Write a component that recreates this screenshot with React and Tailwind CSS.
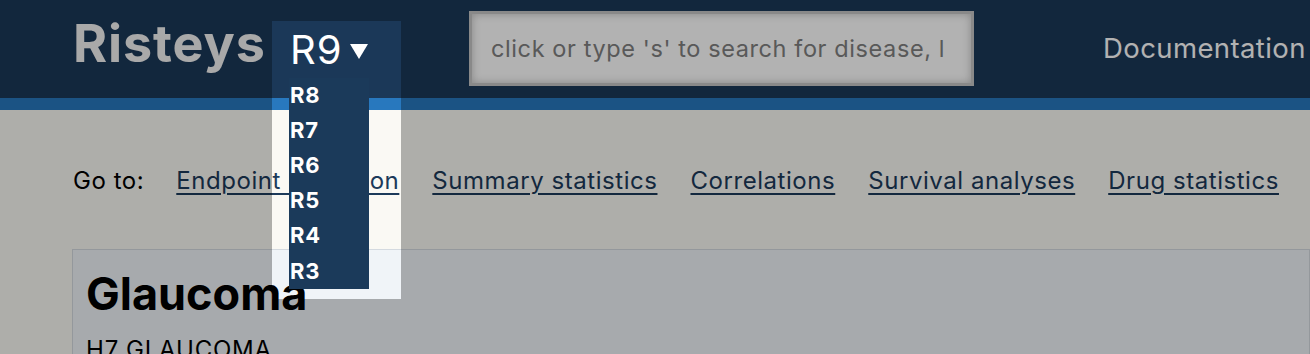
const releases = ['R8', 'R7', 'R6', 'R5', 'R4', 'R3']
const links = ['Endpoint definition', 'Summary statistics', 'Correlations', 'Survival analyses', 'Drug statistics']

export default function App() {
    return (
        <div className="relative min-h-[354px] overflow-hidden bg-[#faf9f4] font-['Inter',sans-serif]">
            <header className="flex items-start h-[98px] bg-[#1b3858] pl-[73px] whitespace-nowrap">
                <div className="w-[199px] mt-[18px] text-[52px] leading-none font-bold tracking-[0.9px] text-[#f2f2f2]">Risteys</div>
                <div className="relative mt-[21px] w-[129px] h-[77px]">
                    <div className="flex items-center gap-[7px] pl-[18px] pt-[8.5px] text-[40px] leading-none tracking-[1px] text-white">
                        R9
                        <svg width="18" height="15" viewBox="0 0 18 15" className="mt-[4px]">
                            <path d="M0 0 H18 L9 15 Z" fill="white" />
                        </svg>
                    </div>
                </div>
                <div className="ml-[68px] mt-[11px] w-[505px] h-[75px] border-[3px] border-[#c4c4c4] bg-white shadow-[inset_0_0_8px_rgba(0,0,0,0.25)] flex items-center pl-[19px] overflow-hidden">
                    <span className="text-[23.5px] tracking-[0.6px] text-[#808080]">click or type 's' to search for disease, l</span>
                </div>
                <div className="ml-[129px] mt-[34.5px] text-[27.5px] leading-none tracking-[0.4px] text-white">Documentation</div>
            </header>
            <div className="h-[12px] bg-[#2878be]" />

            <main className="pl-[72px] pt-[58.5px]">
                <nav className="flex items-start text-[24px] leading-none tracking-[0.55px] whitespace-nowrap">
                    <span className="text-black ml-[1px] mr-[32px]">Go to:</span>
                    <div className="flex gap-[33px]">
                        {links.map((l) => (
                            <a key={l} href="#" className="text-[#1c3a5a] underline underline-offset-[4px] decoration-[1.5px]">
                                {l}
                            </a>
                        ))}
                    </div>
                </nav>
                <section className="mt-[56.5px] border border-[#d4dae0] bg-[#f0f4f8] pl-[13px] pt-[21px] pb-[20px]">
                    <h1 className="text-[45px] leading-none font-bold text-black">Glaucoma</h1>
                    <p className="mt-[22px] text-[24px] leading-none tracking-[0.8px] text-black">H7_GLAUCOMA</p>
                </section>
            </main>

            {/* spotlight on the release picker */}
            <div className="absolute left-[272px] top-[21px] w-[129px] h-[278px] shadow-[0_0_0_3000px_rgba(0,0,0,0.3)] pointer-events-none z-10" />
            <ul className="absolute left-[289px] top-[77.5px] w-[80px] bg-[#1b3a5a] z-20">
                {releases.map((r) => (
                    <li key={r} className="pl-[1px] text-[22px] leading-[35.2px] font-bold tracking-[0.8px] text-white">{r}</li>
                ))}
            </ul>
        </div>
    )
}
